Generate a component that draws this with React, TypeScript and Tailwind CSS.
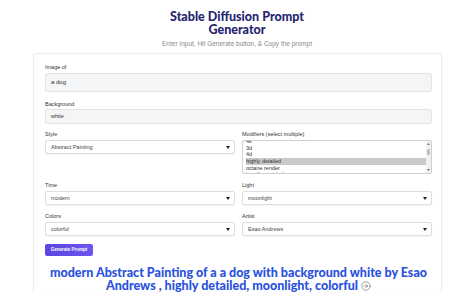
import { CircleArrowRight } from "lucide-react";

const modifiers = ["4k", "3d", "4d", "highly detailed", "octane render", "trending artstation"];

function Label({ text }: { text: string }) {
  return <div className="h-[7px] text-[5.5px] leading-[7px] text-[#333]">{text}</div>;
}

function FakeSelect({ value }: { value: string }) {
  return (
    <div className="mt-[2px] flex h-[14px] items-center justify-between rounded-[2px] border border-[#dedede] bg-white pl-[5px] pr-[4px] shadow-[0_1px_1px_rgba(0,0,0,0.05)]">
      <span className="text-[5.5px] text-[#444]">{value}</span>
      <svg width="4" height="3" viewBox="0 0 4 3">
        <path d="M0 0 L4 0 L2 3 Z" fill="#222" />
      </svg>
    </div>
  );
}

export default function App() {
  return (
    <div className="flex min-h-[301px] w-full flex-col bg-white font-['Liberation_Sans',sans-serif]">
      <h1 className="mt-[10px] text-center font-['Lato',sans-serif] text-[12.5px] leading-[13px] font-black text-[#26266f]">
        Stable Diffusion Prompt
        <br />
        Generator
      </h1>
      <p className="mt-[4px] text-center text-[6.5px] leading-[8px] text-[#8a8a8a]">
        Enter Input, Hit Generate button, &amp; Copy the prompt
      </p>

      <div className="mt-[5px] ml-[33px] w-[409px] rounded-t-[3px] border border-b-0 border-[#ececec] pt-[10px] pr-[9px] pl-[11px] shadow-[0_0_2px_rgba(0,0,0,0.04)]">
        <Label text="Image of" />
        <div className="mt-[2px] flex h-[19px] items-center rounded-[2px] border border-[#e4e4e4] bg-[#f4f5f7] pl-[5px] text-[6px] text-[#333]">
          a dog
        </div>

        <div className="mt-[9px]">
          <Label text="Background" />
        </div>
        <div className="mt-[1px] flex h-[15px] items-center rounded-[2px] border border-[#e4e4e4] bg-[#f4f5f7] pl-[5px] text-[5.5px] text-[#333]">
          white
        </div>

        <div className="mt-[7px] grid grid-cols-2 gap-x-[7px]">
          <div>
            <Label text="Style" />
            <FakeSelect value="Abstract Painting" />
          </div>
          <div>
            <Label text="Modifiers (select multiple)" />
            <div className="mt-[2px] flex h-[34px] overflow-hidden rounded-[2px] border border-[#cfcfcf] bg-white">
              <div className="mt-[-3px] flex-1 pl-[3px]">
                {modifiers.map((m) => (
                  <div
                    key={m}
                    className={`h-[6.7px] text-[5.5px] leading-[6.7px] text-[#333] ${m === "highly detailed" ? "bg-[#c9c9c9]" : ""}`}
                  >
                    {m}
                  </div>
                ))}
              </div>
              <div className="flex w-[5px] flex-col items-center justify-between bg-[#f1f1f1] py-[2px]">
                <svg width="3" height="2" viewBox="0 0 3 2">
                  <path d="M0 2 L3 2 L1.5 0 Z" fill="#777" />
                </svg>
                <div className="mb-[10px] h-[6px] w-[3px] rounded-[1px] bg-[#c1c1c1]" />
                <svg width="3" height="2" viewBox="0 0 3 2">
                  <path d="M0 0 L3 0 L1.5 2 Z" fill="#777" />
                </svg>
              </div>
            </div>
          </div>
        </div>

        <div className="mt-[8px] grid grid-cols-2 gap-x-[7px]">
          <div>
            <Label text="Time" />
            <FakeSelect value="modern" />
          </div>
          <div>
            <Label text="Light" />
            <FakeSelect value="moonlight" />
          </div>
        </div>

        <div className="mt-[8px] grid grid-cols-2 gap-x-[7px]">
          <div>
            <Label text="Colors" />
            <FakeSelect value="colorful" />
          </div>
          <div>
            <Label text="Artist" />
            <FakeSelect value="Esao Andrews" />
          </div>
        </div>

        <button className="mt-[8px] flex h-[12px] w-[48px] items-center justify-center rounded-[2px] bg-gradient-to-r from-[#5a46e4] to-[#6d55ef] text-[4.5px] font-bold text-white">
          Generate Prompt
        </button>

        <p className="mt-[10px] text-center font-['Lato',sans-serif] text-[12.5px] leading-[13px] font-black text-[#2a52de]">
          modern Abstract Painting of a a dog with background white by Esao
          <br />
          Andrews , highly detailed, moonlight, colorful{" "}
          <CircleArrowRight className="inline-block align-[-1px]" size={10} strokeWidth={1.5} color="#6b6b6b" />
        </p>
      </div>
    </div>
  );
}
